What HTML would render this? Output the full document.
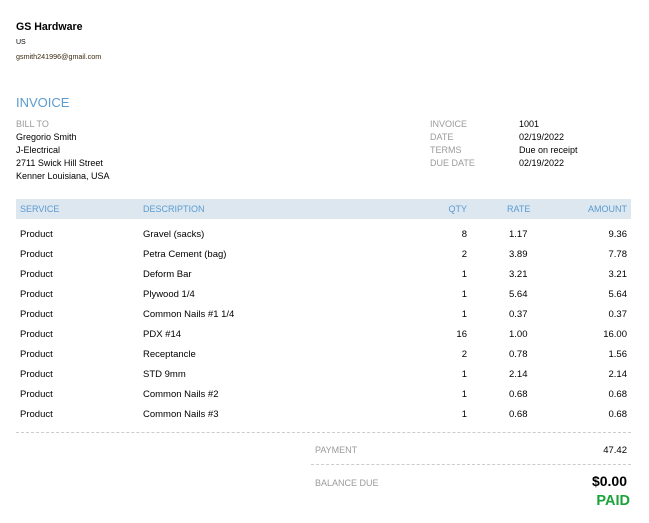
<!DOCTYPE html>
<html><head><meta charset="utf-8"><style>
body{margin:0;width:649px;height:523px;background:#fff;font-family:"Liberation Sans",Arial,sans-serif;position:relative;overflow:hidden;color:#000}
.a{position:absolute;white-space:nowrap;line-height:1}
.s{font-size:9px}
.t{font-size:9.5px}
.g{color:#9b9b9b;font-size:9px}
.h{color:#5b9bd0;font-size:9px}
.r{text-align:right}
</style></head><body>
<div class="a" style="left:16px;top:22px;font-size:10.6px;font-weight:bold">GS Hardware</div>
<div class="a" style="left:16px;top:39px;font-size:7px">US</div>
<div class="a" style="left:16px;top:53px;font-size:7.2px;color:#3a2a10">gsmith241996@gmail.com</div>
<div class="a" style="left:16px;top:96px;font-size:13px;color:#5b9bd0">INVOICE</div>
<div class="a g" style="left:16px;top:120px">BILL TO</div>
<div class="a s" style="left:16px;top:133px">Gregorio Smith</div>
<div class="a s" style="left:16px;top:146px">J-Electrical</div>
<div class="a s" style="left:16px;top:159px">2711 Swick Hill Street</div>
<div class="a s" style="left:16px;top:172px">Kenner Louisiana, USA</div>
<div class="a g" style="left:430px;top:120px">INVOICE</div>
<div class="a g" style="left:430px;top:133px">DATE</div>
<div class="a g" style="left:430px;top:146px">TERMS</div>
<div class="a g" style="left:430px;top:159px">DUE DATE</div>
<div class="a s" style="left:519px;top:120px">1001</div>
<div class="a s" style="left:519px;top:133px">02/19/2022</div>
<div class="a s" style="left:519px;top:146px">Due on receipt</div>
<div class="a s" style="left:519px;top:159px">02/19/2022</div>
<div class="a" style="left:16px;top:199px;width:615px;height:20px;background:#dce7f0"></div>
<div class="a h" style="left:20px;top:205px">SERVICE</div>
<div class="a h" style="left:143px;top:205px">DESCRIPTION</div>
<div class="a h r" style="left:400px;width:67px;top:205px">QTY</div>
<div class="a h" style="left:507px;top:205px">RATE</div>
<div class="a h r" style="left:540px;width:87px;top:205px">AMOUNT</div>
<div id="rows"></div>
<script>
var d=[["Gravel (sacks)",8,"1.17","9.36"],["Petra Cement (bag)",2,"3.89","7.78"],["Deform Bar",1,"3.21","3.21"],["Plywood 1/4",1,"5.64","5.64"],["Common Nails #1 1/4",1,"0.37","0.37"],["PDX #14",16,"1.00","16.00"],["Receptancle",2,"0.78","1.56"],["STD 9mm",1,"2.14","2.14"],["Common Nails #2",1,"0.68","0.68"],["Common Nails #3",1,"0.68","0.68"]];
var h="";d.forEach(function(r,i){var t=230+i*20;
h+='<div class="a t" style="left:20px;top:'+t+'px">Product</div><div class="a t" style="left:143px;top:'+t+'px">'+r[0]+'</div><div class="a t r" style="left:400px;width:67px;top:'+t+'px">'+r[1]+'</div><div class="a t" style="left:509px;top:'+t+'px">'+r[2]+'</div><div class="a t r" style="left:540px;width:87px;top:'+t+'px">'+r[3]+'</div>';});
document.getElementById("rows").innerHTML=h;
</script>
<div class="a" style="left:16px;top:432px;width:615px;border-top:1px dashed #ccc"></div>
<div class="a g" style="left:315px;top:446px">PAYMENT</div>
<div class="a t r" style="left:540px;width:87px;top:446px">47.42</div>
<div class="a" style="left:311px;top:464px;width:320px;border-top:1px dashed #ccc"></div>
<div class="a g" style="left:315px;top:479px">BALANCE DUE</div>
<div class="a r" style="left:500px;width:127px;top:474px;font-size:14px;font-weight:bold">$0.00</div>
<div class="a r" style="left:500px;width:130px;top:494px;font-size:14.5px;font-weight:bold;color:#1aa33a">PAID</div>
</body></html>
